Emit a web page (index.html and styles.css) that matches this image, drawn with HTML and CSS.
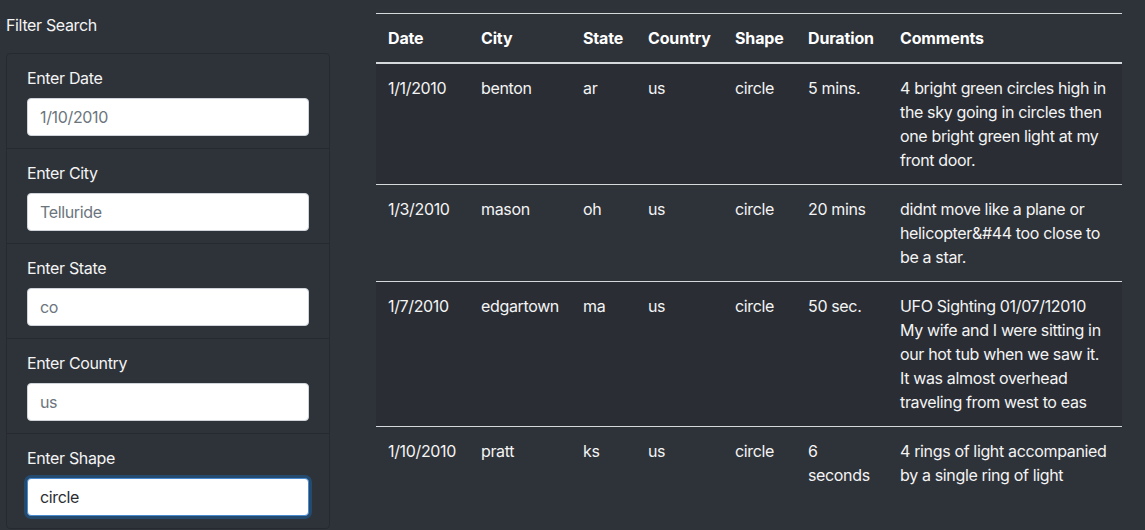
FILE: index.html
```html
<!DOCTYPE html>
<html lang="en">
<head>
<meta charset="utf-8">
<title>UFO Sightings</title>
<link rel="stylesheet" href="styles.css">
</head>
<body>
<div class="page">
  <aside class="filters">
    <div class="filters-title">Filter Search</div>
    <ul class="filter-list">
      <li class="filter-item">
        <label class="filter-label" for="datetime">Enter Date</label>
        <input class="filter-input" id="datetime" type="text" placeholder="1/10/2010">
      </li>
      <li class="filter-item">
        <label class="filter-label" for="city">Enter City</label>
        <input class="filter-input" id="city" type="text" placeholder="Telluride">
      </li>
      <li class="filter-item">
        <label class="filter-label" for="state">Enter State</label>
        <input class="filter-input" id="state" type="text" placeholder="co">
      </li>
      <li class="filter-item">
        <label class="filter-label" for="country">Enter Country</label>
        <input class="filter-input" id="country" type="text" placeholder="us">
      </li>
      <li class="filter-item">
        <label class="filter-label" for="shape">Enter Shape</label>
        <input class="filter-input is-focused" id="shape" type="text" value="circle">
      </li>
    </ul>
  </aside>
  <main class="results">
    <table class="ufo-table">
      <colgroup>
        <col class="c-date"><col class="c-city"><col class="c-state"><col class="c-country"><col class="c-shape"><col class="c-duration"><col class="c-comments">
      </colgroup>
      <thead>
        <tr><th>Date</th><th>City</th><th>State</th><th>Country</th><th>Shape</th><th>Duration</th><th>Comments</th></tr>
      </thead>
      <tbody>
        <tr><td>1/1/2010</td><td>benton</td><td>ar</td><td>us</td><td>circle</td><td>5 mins.</td><td>4 bright green circles high in the sky going in circles then one bright green light at my front door.</td></tr>
        <tr><td>1/3/2010</td><td>mason</td><td>oh</td><td>us</td><td>circle</td><td>20 mins</td><td>didnt move like a plane or helicopter&amp;#44 too close to be a star.</td></tr>
        <tr><td>1/7/2010</td><td>edgartown</td><td>ma</td><td>us</td><td>circle</td><td>50 sec.</td><td>UFO Sighting 01/07/12010 My wife and I were sitting in our hot tub when we saw it. It was almost overhead traveling from west to eas</td></tr>
        <tr><td>1/10/2010</td><td>pratt</td><td>ks</td><td>us</td><td>circle</td><td>6 seconds</td><td>4 rings of light accompanied by a single ring of light</td></tr>
      </tbody>
    </table>
  </main>
</div>
</body>
</html>
```
FILE: styles.css
```css
* { box-sizing: border-box; }
html, body { margin: 0; padding: 0; }
body {
  background: #2e3239;
  color: #ffffff;
  font-family: Inter, "Liberation Sans", sans-serif;
  font-size: 16px;
  line-height: 24px;
  letter-spacing: -0.35px;
  overflow: hidden;
}
.page {
  display: grid;
  grid-template-columns: 324px 746px;
  column-gap: 46px;
  padding-left: 6px;
}
.filters-title {
  margin-top: 13px;
  font-size: 16px;
  line-height: 24px;
  color: #f4f4f4;
}
.filter-list {
  list-style: none;
  margin: 16px 0 0 0;
  padding: 0;
  border: 1px solid rgba(0,0,0,0.16);
  border-radius: 4px;
}
.filter-item {
  padding: 12px 20px;
  border-top: 1px solid rgba(0,0,0,0.16);
}
.filter-item:first-child { border-top: 0; }
.filter-label {
  display: block;
  margin-bottom: 8px;
  color: #f4f4f4;
}
.filter-input {
  display: block;
  width: 100%;
  height: 38px;
  padding: 6px 12px;
  font-family: inherit;
  font-size: 16px;
  letter-spacing: -0.35px;
  color: #2a2e33;
  background: #ffffff;
  border: 1px solid #ced4da;
  border-radius: 4px;
  outline: none;
}
.filter-input::placeholder { color: #6c757d; opacity: 1; }
.filter-input.is-focused {
  border-color: #4a8ad0;
  box-shadow: 0 0 0 3px #244a6e;
}
.results { padding-top: 13px; }
.ufo-table {
  width: 746px;
  table-layout: fixed;
  border-collapse: collapse;
  color: #f4f4f4;
}
.c-date { width: 93px; }
.c-city { width: 102px; }
.c-state { width: 65px; }
.c-country { width: 87px; }
.c-shape { width: 73px; }
.c-duration { width: 92px; }
.c-comments { width: 234px; }
.ufo-table th {
  text-align: left;
  font-weight: 700;
  letter-spacing: -0.15px;
  padding: 12px;
  border-top: 1px solid #d6d9dc;
  border-bottom: 2px solid #d6d9dc;
  vertical-align: bottom;
  color: #ffffff;
}
.ufo-table td {
  padding: 12px;
  border-top: 1px solid #d6d9dc;
  vertical-align: top;
}
.ufo-table tbody tr:nth-child(odd) { background: rgba(0,0,0,0.07); }
```
